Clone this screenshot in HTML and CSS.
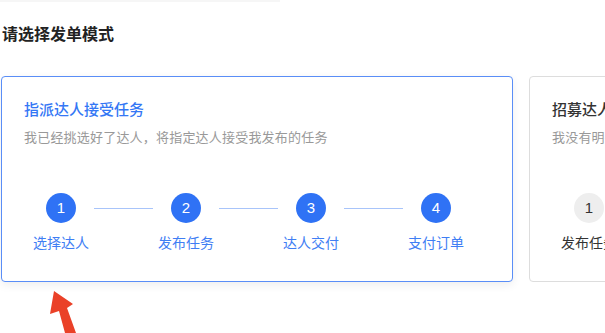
FILE: index.html
```html
<!DOCTYPE html>
<html lang="zh-CN">
<head>
<meta charset="utf-8">
<title>请选择发单模式</title>
<link rel="stylesheet" href="styles.css">
</head>
<body>
<div class="topbar"></div>
<div class="page">
  <h2 class="heading">请选择发单模式</h2>
  <div class="cards">
    <div class="card active">
      <div class="card-title">指派达人接受任务</div>
      <div class="card-desc">我已经挑选好了达人，将指定达人接受我发布的任务</div>
      <div class="steps">
        <div class="step"><span class="dot">1</span><span class="label">选择达人</span></div>
        <div class="conn"></div>
        <div class="step"><span class="dot">2</span><span class="label">发布任务</span></div>
        <div class="conn"></div>
        <div class="step"><span class="dot">3</span><span class="label">达人交付</span></div>
        <div class="conn"></div>
        <div class="step"><span class="dot">4</span><span class="label">支付订单</span></div>
      </div>
    </div>
    <div class="card">
      <div class="card-title">招募达人报名任务</div>
      <div class="card-desc">我没有明确的达人，希望发布任务招募达人报名</div>
      <div class="steps">
        <div class="step"><span class="dot">1</span><span class="label">发布任务</span></div>
        <div class="conn"></div>
        <div class="step"><span class="dot">2</span><span class="label">达人报名</span></div>
        <div class="conn"></div>
        <div class="step"><span class="dot">3</span><span class="label">选择达人</span></div>
        <div class="conn"></div>
        <div class="step"><span class="dot">4</span><span class="label">支付订单</span></div>
      </div>
    </div>
  </div>
</div>
<svg class="arrow" width="40" height="50" viewBox="0 0 40 50" aria-hidden="true">
  <polygon points="14,1 33,14 27,18 36,43 25,43 19,21 10,24" fill="#ea4128"/>
</svg>
</body>
</html>
```
FILE: styles.css
```css
html, body {
  margin: 0;
  padding: 0;
  background: #ffffff;
  overflow: hidden;
  width: 605px;
  height: 333px;
}
body {
  font-family: "Noto Sans CJK SC", "Noto Sans", sans-serif;
  position: relative;
}
.topbar {
  width: 280px;
  height: 2px;
  background: #f6f6f6;
}
.page {
  padding-left: 1px;
}
.heading {
  margin: 19px 0 0 1px;
  font-size: 16px;
  line-height: 24px;
  font-weight: 600;
  color: #222;
}
.cards {
  display: flex;
  gap: 16px;
  margin-top: 31px;
  width: 700px;
}
.card {
  flex: 0 0 512px;
  box-sizing: border-box;
  height: 206px;
  border: 1px solid #dddddd;
  border-radius: 4px;
  padding: 21px 22px 0 22px;
  background: #fff;
  overflow: hidden;
}
.card.active {
  border-color: #5a8ef7;
  box-shadow: 0 3px 10px rgba(0, 0, 0, 0.07);
}
.card-title {
  font-size: 15px;
  line-height: 22px;
  font-weight: 500;
  color: #333;
  white-space: nowrap;
}
.card.active .card-title {
  color: #3477f5;
}
.card-desc {
  margin-top: 8px;
  font-size: 13px;
  line-height: 18px;
  letter-spacing: 0.2px;
  color: #999;
  white-space: nowrap;
}
.steps {
  display: flex;
  align-items: flex-start;
  margin-top: 47px;
  padding-left: 9px;
}
.step {
  flex: 0 0 56px;
  display: flex;
  flex-direction: column;
  align-items: center;
}
.dot {
  width: 30px;
  height: 30px;
  border-radius: 50%;
  background: #eeeeee;
  color: #333;
  font-family: "Liberation Sans", "Noto Sans", sans-serif;
  font-size: 15px;
  line-height: 30px;
  text-align: center;
}
.card.active .dot {
  background: #2f72f5;
  color: #fff;
}
.label {
  margin-top: 9px;
  font-size: 14px;
  line-height: 20px;
  color: #333;
  white-space: nowrap;
}
.card.active .label {
  color: #3f7ef4;
}
.conn {
  flex: 0 0 69px;
  height: 30px;
  display: flex;
  align-items: center;
  padding: 0 5px;
  box-sizing: border-box;
}
.conn::before {
  content: "";
  display: block;
  width: 100%;
  height: 1px;
  background: #a8c4fa;
}
.arrow {
  position: absolute;
  left: 40px;
  top: 290px;
}
```
